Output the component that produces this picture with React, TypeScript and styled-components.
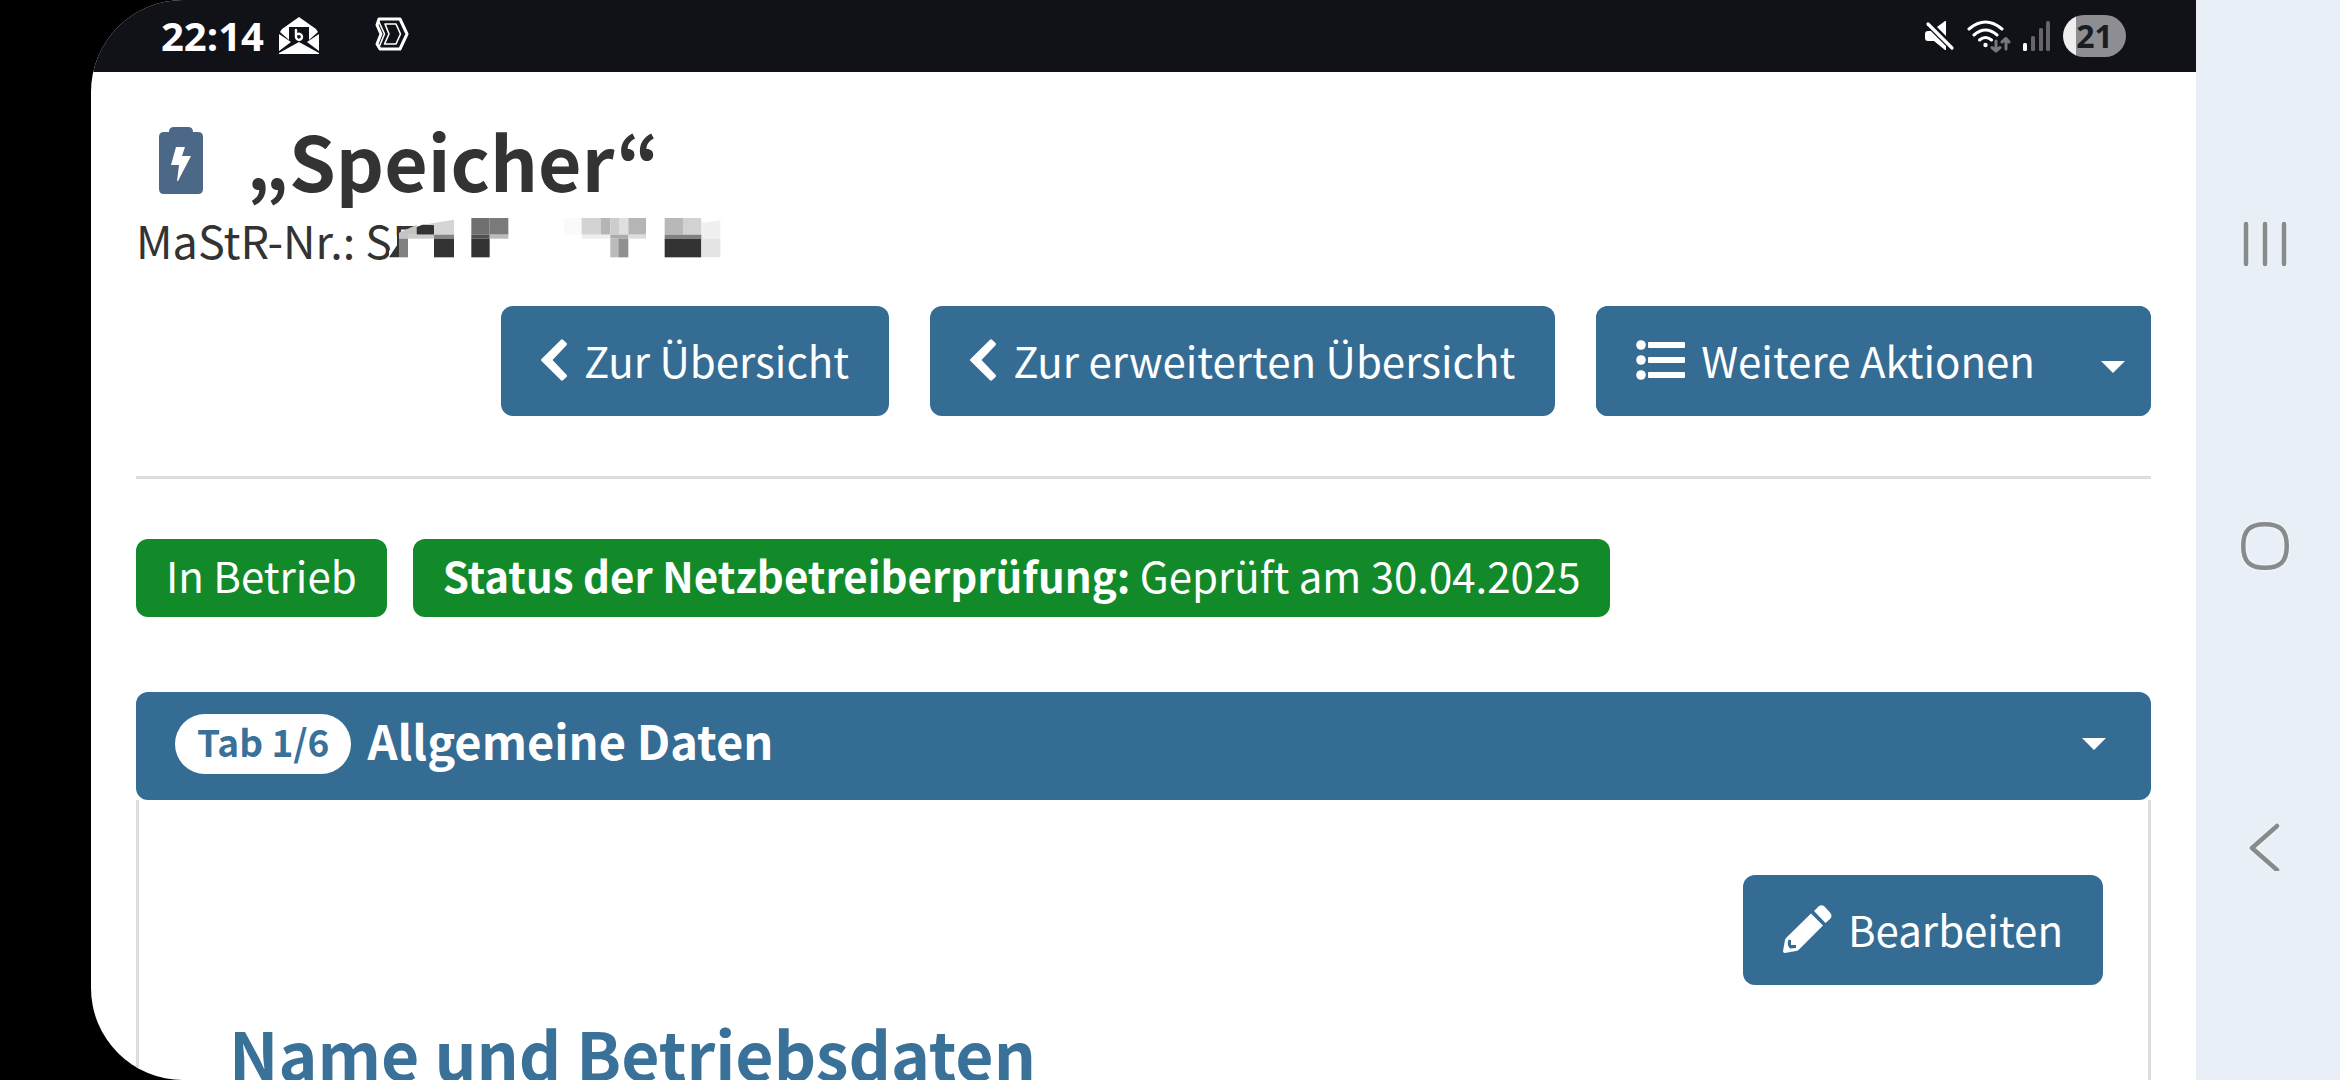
import React from "react";
import styled, { createGlobalStyle } from "styled-components";

const blue = "#356c93";
const green = "#128a2a";
const line = "#dddddd";
const ink = "#333333";

const GlobalStyle = createGlobalStyle`
  * { box-sizing: border-box; }
  body {
    margin: 0;
    background: #000;
    font-family: "Noto Sans CJK KR", "Open Sans", sans-serif;
    font-size: 42px;
    color: ${ink};
  }
  button { font: inherit; border: 0; cursor: pointer; }
  svg { display: block; flex: none; }
`;

const Device = styled.div`
  display: flex;
  height: 100vh;
  padding-left: 91px;
  overflow: hidden;
`;

const Screen = styled.div`
  flex: 1;
  min-width: 0;
  overflow: hidden;
  background: #fff;
  border-radius: 92px 0 0 92px;
`;

const StatusBar = styled.div`
  display: flex;
  align-items: center;
  justify-content: space-between;
  height: 72px;
  padding: 0 70px;
  background: #111218;
  color: #fff;
`;

const StatusGroup = styled.div<{ $gap: number }>`
  display: flex;
  align-items: center;
  gap: ${(p) => p.$gap}px;
`;

const Clock = styled.time`
  margin-right: 15px;
  font: 700 40px/48px "Open Sans", sans-serif;
`;

const AppIcons = styled.div`
  display: flex;
  gap: 56px;
`;

const Battery = styled.div`
  display: flex;
  align-items: center;
  justify-content: center;
  width: 63px;
  height: 42px;
  border-radius: 21px;
  background: linear-gradient(90deg, #eeeeee 13px, #8e8d92 13px);
  color: #1b1c22;
  font: 700 32px/42px "Open Sans", sans-serif;
`;

const Page = styled.main`
  padding: 40px 45px 0;
`;

const TitleRow = styled.div`
  display: flex;
  align-items: center;
  gap: 43px;
  padding-left: 23px;
`;

const Title = styled.h1`
  margin: 0;
  font-size: 75px;
  line-height: 96px;
  font-weight: 700;
`;

const UnitNumber = styled.p`
  position: relative;
  margin: 0;
  font-size: 45px;
  line-height: 64px;
`;

const Mosaic = styled.svg`
  position: absolute;
  left: 253px;
  top: 10px;
`;

const Actions = styled.div`
  display: flex;
  justify-content: flex-end;
  gap: 41px;
  margin-top: 34px;
`;

const Button = styled.button`
  display: flex;
  align-items: center;
  gap: 16px;
  padding: 24px 40px 26px;
  border-radius: 12px;
  background: ${blue};
  color: #fff;
  line-height: 60px;
`;

const Split = styled.div`
  display: flex;
  border-radius: 12px;
  overflow: hidden;
  background: ${blue};

  ${Button} { border-radius: 0; }
`;

const Toggle = styled.button`
  display: flex;
  align-items: center;
  justify-content: center;
  width: 76px;
  padding: 12px 0 0;
  background: ${blue};
`;

const Rule = styled.hr`
  height: 3px;
  margin: 60px 0;
  border: 0;
  background: ${line};
`;

const Badges = styled.div`
  display: flex;
  gap: 26px;
`;

const Badge = styled.span`
  padding: 6px 30px 12px;
  border-radius: 12px;
  background: ${green};
  color: #fff;
  line-height: 60px;
`;

const TabHeader = styled.button`
  display: flex;
  align-items: center;
  gap: 16px;
  width: 100%;
  margin-top: 75px;
  padding: 20px 45px 24px 39px;
  border-radius: 12px;
  background: ${blue};
  color: #fff;
  font-weight: 700;
  text-align: left;
`;

const Pill = styled.span`
  padding: 0 22px 6px;
  border-radius: 30px;
  background: #fff;
  color: #3a7199;
  font-size: 37px;
  line-height: 54px;
`;

const TabTitle = styled.span`
  flex: 1;
  padding-bottom: 8px;
  font-size: 47px;
  line-height: 56px;
`;

const Panel = styled.section`
  padding: 75px 45px 0;
  border: solid ${line};
  border-width: 0 3px;
`;

const PanelActions = styled.div`
  display: flex;
  justify-content: flex-end;
`;

const SectionTitle = styled.h2`
  margin: 0;
  padding: 22px 45px 24px;
  color: #3a7199;
  font-size: 66px;
  line-height: 90px;
  font-weight: 700;
`;

const NavBar = styled.nav`
  display: flex;
  flex-direction: column;
  width: 144px;
  padding: 95px 0 83px;
  background: #e8eff6;
`;

const NavButton = styled.button`
  display: flex;
  flex: 1;
  align-items: center;
  justify-content: center;
  padding: 0 6px 0 0;
  background: none;

  svg { filter: drop-shadow(0 0 2px #f6f9fb); }
`;

const MailIcon = () => (
  <svg width="40" height="38" viewBox="0 0 40 38" aria-hidden="true">
    <path d="M20 0 37 12 39 15 30 23V10H10V23L1 15 3 12Z" fill="#fff" />
    <path d="M0 17 12 25 0 34ZM40 17 28 25 40 34ZM20 25 40 36V37H0V36Z" fill="#fff" />
    <path d="M17 13v7a3 3 0 1 0 2-3" fill="none" stroke="#fff" strokeWidth="2.4" strokeLinecap="round" />
  </svg>
);

const ArrowIcon = () => (
  <svg width="34" height="34" viewBox="0 0 34 34" fill="none" stroke="#fff" strokeLinejoin="round" aria-hidden="true">
    <path d="M4 2H25L32 17 25 32H5L2 27 6 17 2 8Z" strokeWidth="3" />
    <path d="M10 7H21L25.500 17 21 27H9.500L14 17Z" strokeWidth="1.6" />
    <path d="M4 5 9.500 17 4.500 29" strokeWidth="1.6" />
  </svg>
);

const MuteIcon = () => (
  <svg width="30" height="30" viewBox="0 0 30 30" aria-hidden="true">
    <path d="M3 10H8L21 23V29H20L9 20H3Q0 20 0 17V13Q0 10 3 10ZM12 6 20 0H21V15Z" fill="#fff" />
    <path d="M3 3 27 27" stroke="#111218" strokeWidth="6" />
    <path d="M3 3 27 27" stroke="#fff" strokeWidth="3.2" strokeLinecap="round" />
  </svg>
);

const WifiIcon = () => (
  <svg width="44" height="34" viewBox="0 0 44 34" fill="none" stroke="#fff" strokeWidth="3" strokeLinecap="round" aria-hidden="true">
    <path d="M2 10Q18.500-4 35 10M7 16Q18.500 6 30 16M12.500 21Q18.500 16 24.500 21" />
    <circle cx="18.500" cy="26" r="2.200" fill="#fff" stroke="none" />
    <g stroke="#77777b" strokeLinejoin="round">
      <path d="M29 22V32M25 28.500 29 32 33 28.500M39 30V19.500M35 23 39 19.500 42 23" />
    </g>
  </svg>
);

const SignalIcon = () => (
  <svg width="28" height="30" viewBox="0 0 28 30" aria-hidden="true">
    <rect x="0" y="22" width="4" height="8" rx="1.500" fill="#fff" />
    <g fill="#66666a">
      <rect x="8" y="15" width="4" height="15" rx="1.500" />
      <rect x="16" y="7" width="4" height="23" rx="1.500" />
      <rect x="23" y="0" width="4" height="30" rx="1.500" />
    </g>
  </svg>
);

const BatteryIcon = () => (
  <svg width="44" height="67" viewBox="0 0 44 67" aria-hidden="true">
    <path d="M10 5Q10 0 15 0H29Q34 0 34 5H39Q44 5 44 10V62Q44 67 39 67H5Q0 67 0 62V10Q0 5 5 5Z" fill="#4b6887" />
    <path d="M17 20H26L23 29H32L19 54H18L20 38H12Z" fill="#fff" />
  </svg>
);

const ChevronIcon = () => (
  <svg width="27" height="42" viewBox="0 0 27 42" aria-hidden="true">
    <path d="M0.500 20 20 0.700Q21 0 22 0.700L25.500 4Q26.500 5 25.500 6.200L11.500 21 25.500 35.800Q26.500 37 25.500 38L22 41.300Q21 42 20 41.300L0.500 22Q-0.500 21 0.500 20Z" fill="#fff" />
  </svg>
);

const ListIcon = () => (
  <svg width="49" height="40" viewBox="0 0 49 40" fill="#fff" aria-hidden="true">
    {[5, 20, 35].map((y) => (
      <g key={y}>
        <circle cx="5" cy={y} r="4.800" />
        <rect x="12" y={y - 3} width="37" height="6" rx="1" />
      </g>
    ))}
  </svg>
);

const PencilIcon = () => (
  <svg width="49" height="48" viewBox="0 0 49 48" aria-hidden="true">
    <path d="M28 8.500 40 20.500 16 44.500Q15 45.500 13 46L2 48Q0 48 0 46L2 35Q2.300 33.500 3.500 32.500ZM31 6 35.500 1.500Q38.500-1 41.500 1.500L47 7.500Q50 11 47 14L42.500 18Z" fill="#fff" />
    <path d="M5 36Q5 34 8 35V40H13V43L7 43.500Q4 41 5 36Z" fill={blue} />
  </svg>
);

const Caret = () => (
  <svg width="24" height="12" viewBox="0 0 24 12" aria-hidden="true">
    <path d="M0 0H24L12 12Z" fill="#fff" />
  </svg>
);

const topCells: [number, number, string][] = [
  [247, 55, "#707070"], [302, 56, "#7a7a7a"], [525, 53, "#fafafa"], [578, 57, "#d3d3d3"],
  [635, 29, "#b5b5b5"], [664, 26, "#cdcdcd"], [690, 28, "#dfdfdf"], [718, 53, "#b5b5b5"],
  [827, 55, "#b8b8b8"], [882, 54, "#d2d2d2"],
];
const middleCells: [number, number, string][] = [
  [57, 78, "#cccccc"], [135, 60, "#858585"], [247, 55, "#505050"], [302, 56, "#bbbbbb"],
  [578, 86, "#eeeeee"], [664, 54, "#aaaaaa"], [718, 53, "#dddddd"], [827, 110, "#808080"],
];
const bottomCells: [number, number, string][] = [
  [30, 27, "#828282"], [135, 60, ink], [247, 55, ink], [664, 24, "#bbbbbb"],
  [688, 30, "#909090"], [827, 110, ink], [937, 57, "#e4e4e4"],
];

const RedactedDigits = () => (
  <Mosaic width="332" height="42" viewBox="0 0 996 126" aria-hidden="true">
    <path d="M24 50 80 34H135V126H0V100Z" fill="#fff" />
    <path d="M0 118 24 82V50L30 40V118Z" fill={ink} />
    <path d="M30 44 83 20V50H57V62H30Z" fill="#c4c4c4" />
    <path d="M83 27 100 20H135V50H83Z" fill={ink} />
    <path d="M110 19 195 5V50H135V22Z" fill="#d5d5d5" />
    <path d="M936 6 945 14 994 6V62H936Z" fill="#f0f0f0" />
    {topCells.map(([x, w, c]) => <rect key={x} x={x} y="0" width={w} height="50" fill={c} />)}
    {middleCells.map(([x, w, c]) => <rect key={x} x={x} y="50" width={w} height="12" fill={c} />)}
    {bottomCells.map(([x, w, c]) => <rect key={x} x={x} y="62" width={w} height="56" fill={c} />)}
  </Mosaic>
);

export default function App() {
  return (
    <Device lang="de">
      <GlobalStyle />
      <Screen>
        <StatusBar>
          <StatusGroup $gap={0}>
            <Clock>22:14</Clock>
            <AppIcons>
              <MailIcon />
              <ArrowIcon />
            </AppIcons>
          </StatusGroup>
          <StatusGroup $gap={12}>
            <MuteIcon />
            <WifiIcon />
            <SignalIcon />
            <Battery>21</Battery>
          </StatusGroup>
        </StatusBar>
        <Page>
          <TitleRow>
            <BatteryIcon />
            <Title>„Speicher“</Title>
          </TitleRow>
          <UnitNumber>
            MaStR-Nr.: SE
            <RedactedDigits />
          </UnitNumber>
          <Actions>
            <Button type="button"><ChevronIcon />Zur Übersicht</Button>
            <Button type="button"><ChevronIcon />Zur erweiterten Übersicht</Button>
            <Split>
              <Button type="button"><ListIcon />Weitere Aktionen</Button>
              <Toggle type="button" aria-label="Menü öffnen"><Caret /></Toggle>
            </Split>
          </Actions>
          <Rule />
          <Badges>
            <Badge>In Betrieb</Badge>
            <Badge><strong>Status der Netzbetreiberprüfung:</strong> Geprüft am 30.04.2025</Badge>
          </Badges>
          <TabHeader type="button" aria-expanded="true">
            <Pill>Tab 1/6</Pill>
            <TabTitle>Allgemeine Daten</TabTitle>
            <Caret />
          </TabHeader>
          <Panel>
            <PanelActions>
              <Button type="button"><PencilIcon />Bearbeiten</Button>
            </PanelActions>
            <SectionTitle>Name und Betriebsdaten</SectionTitle>
          </Panel>
        </Page>
      </Screen>
      <NavBar aria-label="Systemnavigation">
        <NavButton type="button" aria-label="Letzte Apps">
          <svg width="48" height="48" viewBox="0 0 48 48" stroke="#878b8c" strokeWidth="4.500" strokeLinecap="round">
            <path d="M5 3V43M24 3V43M43 3V43" />
          </svg>
        </NavButton>
        <NavButton type="button" aria-label="Startseite">
          <svg width="48" height="48" viewBox="0 0 48 48" fill="none" stroke="#878b8c" strokeWidth="4.500">
            <path d="M24 2.250C39 2.250 45.750 8 45.750 24S39 45.750 24 45.750 2.250 40 2.250 24 9 2.250 24 2.250Z" />
          </svg>
        </NavButton>
        <NavButton type="button" aria-label="Zurück">
          <svg width="48" height="48" viewBox="0 0 48 48" fill="none" stroke="#878b8c" strokeWidth="4.500" strokeLinecap="round" strokeLinejoin="round">
            <path d="M36 3 11 25 36 47" />
          </svg>
        </NavButton>
      </NavBar>
    </Device>
  );
}
